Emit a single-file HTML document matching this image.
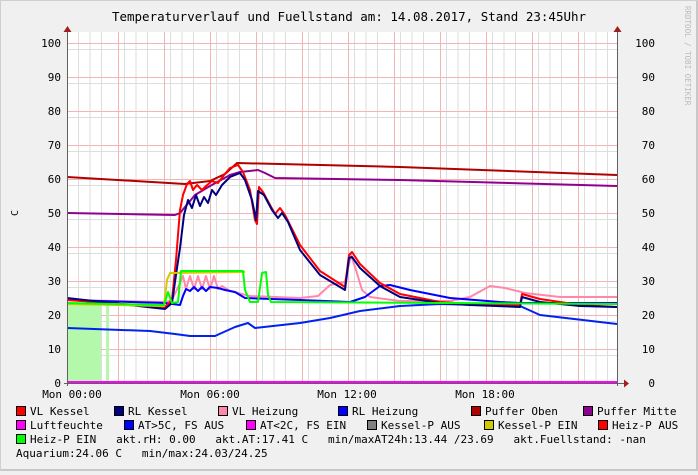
<!DOCTYPE html>
<html><head><meta charset="utf-8"><style>
body{margin:0;width:698px;height:471px;overflow:hidden;background:#f0f0f0;font-family:"DejaVu Sans Mono","Liberation Mono",monospace;}
</style></head><body>
<svg width="698" height="471" xmlns="http://www.w3.org/2000/svg" font-family="DejaVu Sans Mono, Liberation Mono, monospace">
<rect x="0" y="0" width="698" height="471" fill="#f0f0f0"/>
<rect x="696" y="0" width="2" height="471" fill="#c8c8c8"/>
<rect x="0" y="469" width="698" height="2" fill="#c8c8c8"/>
<rect x="0" y="0" width="698" height="1" fill="#cfcfcf"/>
<rect x="0" y="0" width="1" height="471" fill="#cfcfcf"/>
<text x="349" y="21" font-size="12.5" text-anchor="middle" fill="#000">Temperaturverlauf und Fuellstand am: 14.08.2017, Stand 23:45Uhr</text>
<text transform="translate(685,6) rotate(90)" font-size="7.5" fill="#bbb">RRDTOOL / TOBI OETIKER</text>
<text transform="translate(18,213) rotate(-90)" font-size="10" text-anchor="middle">C</text>
<rect x="67" y="32" width="550" height="351" fill="#fff"/>
<g stroke="#dedede" stroke-width="1">
<path d="M67 49.5H617M67 83.5H617M67 117.5H617M67 151.5H617M67 185.5H617M67 219.5H617M67 253.5H617M67 287.5H617M67 321.5H617M67 355.5H617"/>
<path d="M78.5 32V383M90 32V383M101.5 32V383M124.5 32V383M136 32V383M147.5 32V383M170.5 32V383M182 32V383M193.5 32V383M216.5 32V383M228 32V383M239.5 32V383M262.5 32V383M274 32V383M285.5 32V383M308.5 32V383M320 32V383M331.5 32V383M354.5 32V383M366 32V383M377.5 32V383M400.5 32V383M412 32V383M423.5 32V383M446.5 32V383M458 32V383M469.5 32V383M492.5 32V383M504 32V383M515.5 32V383M538.5 32V383M550 32V383M561.5 32V383M584.5 32V383M596 32V383M607.5 32V383"/>
</g>
<g stroke="#f2b4b4" stroke-width="1">
<path d="M67 43.5H617M67 77.5H617M67 111.5H617M67 145.5H617M67 179.5H617M67 213.5H617M67 247.5H617M67 281.5H617M67 315.5H617M67 349.5H617"/>
<path d="M118.5 32V383M164.5 32V383M210.5 32V383M256.5 32V383M302.5 32V383M348.5 32V383M394.5 32V383M440.5 32V383M486.5 32V383M532.5 32V383M578.5 32V383"/>
</g>
<rect x="67" y="304" width="34" height="79" fill="#b4f8ac"/>
<rect x="106" y="304" width="3" height="79" fill="#b4f8ac"/>
<g fill="none" stroke-width="2" stroke-linejoin="round">
<polyline stroke="#b00000" points="67,177 185,184 210,181 225,174 237,163 400,167 617,175"/>
<polyline stroke="#900090" points="67,213 175,215 180,213 195,195 210,186 230,175 240,172 258,170 265,173 275,178 400,180 617,186"/>
<polyline stroke="#ff88aa" points="67,300 165,302 172,300 180,283 183,276 186,289 190,276 194,289 198,276 202,289 206,276 210,289 214,276 218,289 222,286 230,291 250,296 300,298 318,296 330,285 345,282 351,255 356,270 362,290 370,297 400,301 450,301 470,297 490,286 505,288 525,293 560,297 617,297"/>
<polyline stroke="#0000ff" points="67,300 165,303 180,305 183,296 186,289 190,291 194,287 198,291 202,287 206,291 210,287 218,288 225,290 235,292 245,298 300,300 350,302 365,297 380,286 390,285 410,290 450,298 500,302 520,303 617,303"/>
<polyline stroke="#0022ee" points="67,328 150,331 175,334 190,336 215,336 235,327 248,323 255,328 300,323 330,318 360,311 400,306 440,304 520,306 540,315 617,324"/>
<polyline stroke="#ff0000" points="67,300 165,307 172,300 176,260 180,210 183,195 187,184 190,181 193,190 197,185 202,190 206,186 212,181 218,183 224,175 230,168 238,165 243,172 250,190 255,220 257,224 259,187 263,192 270,205 275,214 280,208 285,215 300,245 320,271 345,287 349,255 352,252 360,264 380,283 400,294 440,302 470,304 520,305 522,294 540,299 580,305 617,307"/>
<polyline stroke="#000080" points="67,298 165,309 172,303 176,275 180,248 184,215 188,200 192,208 196,195 200,206 204,197 208,203 212,190 216,195 222,185 230,177 240,173 245,180 252,200 256,220 258,191 264,195 272,210 278,218 282,213 288,222 300,250 320,275 345,290 349,258 352,257 360,268 380,286 400,297 440,303 470,305 520,307 522,297 540,302 580,306 617,307"/>
<polyline stroke="#cccc00" points="67,304 164,306 167,280 170,273 245,272"/>
<polyline stroke="#00ff00" points="67,303 164,305 168,292 172,303 178,302 181,271 243,271 245,290 250,302 258,302 262,273 266,272 268,295 271,302 617,304"/>
<polyline stroke="#ff00ff" points="67,382 617,382"/>
</g>
<g stroke="#606060" stroke-width="1">
<path d="M67.5 32V386M617.5 32V386M64 383.5H624"/>
</g>
<path d="M63.5 32L67.5 26L71.5 32Z M613.5 32L617.5 26L621.5 32Z M624 379.5L629 383.5L624 387.5Z" fill="#a02020"/>
<g font-size="11" fill="#000" text-anchor="end">
<text x="61" y="47">100</text><text x="61" y="81">90</text><text x="61" y="115">80</text><text x="61" y="149">70</text><text x="61" y="183">60</text><text x="61" y="217">50</text><text x="61" y="251">40</text><text x="61" y="285">30</text><text x="61" y="319">20</text><text x="61" y="353">10</text><text x="61" y="387">0</text>
<text x="655" y="47">100</text><text x="655" y="81">90</text><text x="655" y="115">80</text><text x="655" y="149">70</text><text x="655" y="183">60</text><text x="655" y="217">50</text><text x="655" y="251">40</text><text x="655" y="285">30</text><text x="655" y="319">20</text><text x="655" y="353">10</text><text x="655" y="387">0</text>
</g>
<g font-size="11" fill="#000" text-anchor="middle">
<text x="72" y="398">Mon 00:00</text><text x="210" y="398">Mon 06:00</text><text x="347" y="398">Mon 12:00</text><text x="485" y="398">Mon 18:00</text>
</g>
<g stroke="#000" stroke-width="1">
<rect x="16.5" y="406.5" width="9" height="9" fill="#ff0000"/>
<rect x="114.5" y="406.5" width="9" height="9" fill="#000080"/>
<rect x="218.5" y="406.5" width="9" height="9" fill="#ff88aa"/>
<rect x="338.5" y="406.5" width="9" height="9" fill="#0000ff"/>
<rect x="471.5" y="406.5" width="9" height="9" fill="#b00000"/>
<rect x="583.5" y="406.5" width="9" height="9" fill="#900090"/>
<rect x="16.5" y="420.5" width="9" height="9" fill="#ff00ff"/>
<rect x="124.5" y="420.5" width="9" height="9" fill="#0000ff"/>
<rect x="246.5" y="420.5" width="9" height="9" fill="#ff00ff"/>
<rect x="367.5" y="420.5" width="9" height="9" fill="#808080"/>
<rect x="484.5" y="420.5" width="9" height="9" fill="#cccc00"/>
<rect x="598.5" y="420.5" width="9" height="9" fill="#ff0000"/>
<rect x="16.5" y="434.5" width="9" height="9" fill="#00ff00"/>
</g>
<g font-size="11" fill="#000">
<text x="30" y="415">VL Kessel</text><text x="128" y="415">RL Kessel</text><text x="232" y="415">VL Heizung</text><text x="352" y="415">RL Heizung</text><text x="485" y="415">Puffer Oben</text><text x="597" y="415">Puffer Mitte</text>
<text x="30" y="429">Luftfeuchte</text><text x="138" y="429">AT&gt;5C, FS AUS</text><text x="260" y="429">AT&lt;2C, FS EIN</text><text x="381" y="429">Kessel-P AUS</text><text x="498" y="429">Kessel-P EIN</text><text x="612" y="429">Heiz-P AUS</text>
<text x="30" y="443" xml:space="preserve">Heiz-P EIN   akt.rH: 0.00   akt.AT:17.41 C   min/maxAT24h:13.44 /23.69   akt.Fuellstand: -nan</text>
<text x="16" y="457" xml:space="preserve">Aquarium:24.06 C   min/max:24.03/24.25</text>
</g>
</svg>
</body></html>
